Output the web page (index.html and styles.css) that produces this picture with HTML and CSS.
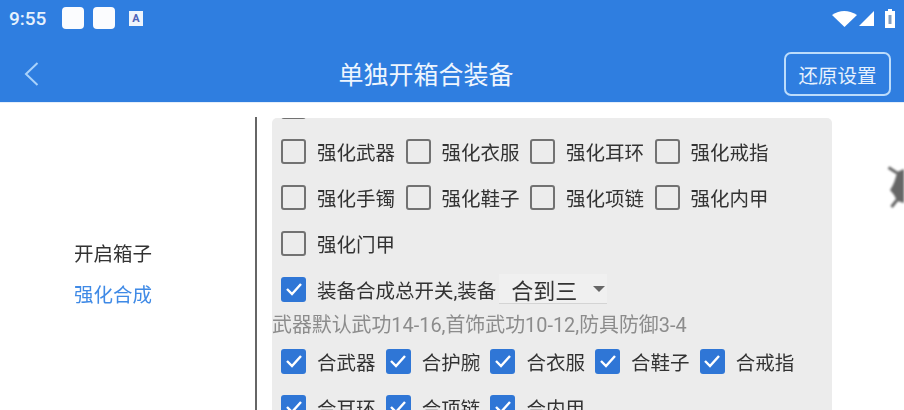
FILE: index.html
```html
<!DOCTYPE html>
<html lang="zh-CN">
<head>
  <meta charset="UTF-8">
  <meta name="viewport" content="width=device-width, initial-scale=1.0">
  <title>单独开箱合装备</title>
  <link rel="stylesheet" href="styles.css">
</head>
<body>

<div class="header">
  <div class="status-bar">
    <span class="clock">9:55</span>
    <span class="note-icon"></span>
    <span class="note-icon"></span>
    <span class="app-icon">A</span>
    <span class="status-right">
      <svg width="25" height="17" viewBox="0 0 25 17"><path d="M0 5 Q12 -3 25 5 L12.5 17 Z" fill="#fff"/></svg>
      <svg width="15" height="15" viewBox="0 0 15 15"><path d="M15 0 V15 H0 Z" fill="#fff"/></svg>
      <svg class="battery" width="10" height="19" viewBox="0 0 10 19"><path d="M3 0 H7 V2 H10 V19 H0 V2 H3 Z" fill="#fff"/><path d="M3.5 6 H6.5 V15 H3.5 Z" fill="#7f9cc0"/></svg>
    </span>
  </div>
  <div class="title-bar">
    <svg class="back" width="15" height="24" viewBox="0 0 15 24"><path d="M13.5 1 L2 12 L13.5 23" fill="none" stroke="#a9d2fb" stroke-width="2"/></svg>
    <h1>单独开箱合装备</h1>
    <button class="reset-btn" type="button">还原设置</button>
  </div>
</div>

<div class="content">
  <div class="sidebar">
    <div class="menu-item">开启箱子</div>
    <div class="menu-item active">强化合成</div>
  </div>

  <div class="panel">
    <div class="panel-scroll">
      <div class="row"><span class="box"></span></div>

      <div class="row row-wide">
        <label class="check"><span class="box"></span>强化武器</label>
        <label class="check"><span class="box"></span>强化衣服</label>
        <label class="check"><span class="box"></span>强化耳环</label>
        <label class="check"><span class="box"></span>强化戒指</label>
      </div>
      <div class="row row-wide">
        <label class="check"><span class="box"></span>强化手镯</label>
        <label class="check"><span class="box"></span>强化鞋子</label>
        <label class="check"><span class="box"></span>强化项链</label>
        <label class="check"><span class="box"></span>强化内甲</label>
      </div>
      <div class="row row-wide">
        <label class="check"><span class="box"></span>强化门甲</label>
      </div>

      <div class="row">
        <label class="check">
          <span class="box on"><svg width="18" height="14" viewBox="0 0 18 14"><path d="M2 7 L7 12 L16 2" fill="none" stroke="#fff" stroke-width="2.4"/></svg></span>
          装备合成总开关,装备
        </label>
        <div class="select">合到三<span class="arrow"></span></div>
      </div>
      <p class="hint">武器默认武功14-16,首饰武功10-12,防具防御3-4</p>

      <div class="row row-narrow">
        <label class="check"><span class="box on"><svg width="18" height="14" viewBox="0 0 18 14"><path d="M2 7 L7 12 L16 2" fill="none" stroke="#fff" stroke-width="2.4"/></svg></span>合武器</label>
        <label class="check"><span class="box on"><svg width="18" height="14" viewBox="0 0 18 14"><path d="M2 7 L7 12 L16 2" fill="none" stroke="#fff" stroke-width="2.4"/></svg></span>合护腕</label>
        <label class="check"><span class="box on"><svg width="18" height="14" viewBox="0 0 18 14"><path d="M2 7 L7 12 L16 2" fill="none" stroke="#fff" stroke-width="2.4"/></svg></span>合衣服</label>
        <label class="check"><span class="box on"><svg width="18" height="14" viewBox="0 0 18 14"><path d="M2 7 L7 12 L16 2" fill="none" stroke="#fff" stroke-width="2.4"/></svg></span>合鞋子</label>
        <label class="check"><span class="box on"><svg width="18" height="14" viewBox="0 0 18 14"><path d="M2 7 L7 12 L16 2" fill="none" stroke="#fff" stroke-width="2.4"/></svg></span>合戒指</label>
      </div>
      <div class="row row-narrow">
        <label class="check"><span class="box on"><svg width="18" height="14" viewBox="0 0 18 14"><path d="M2 7 L7 12 L16 2" fill="none" stroke="#fff" stroke-width="2.4"/></svg></span>合耳环</label>
        <label class="check"><span class="box on"><svg width="18" height="14" viewBox="0 0 18 14"><path d="M2 7 L7 12 L16 2" fill="none" stroke="#fff" stroke-width="2.4"/></svg></span>合项链</label>
        <label class="check"><span class="box on"><svg width="18" height="14" viewBox="0 0 18 14"><path d="M2 7 L7 12 L16 2" fill="none" stroke="#fff" stroke-width="2.4"/></svg></span>合内甲</label>
      </div>
    </div>
  </div>

  <svg class="float-icon" width="17" height="46" viewBox="0 0 17 46">
    <path d="M1.5 2.5 L10 8 M4.5 42 L10 35" fill="none" stroke="#666" stroke-width="3"/>
    <path d="M10 7 L17 4 V38 L10 36 Q8 30 3 25 Q8 18 10 7 Z" fill="#666"/>
  </svg>
</div>

</body>
</html>
```

FILE: styles.css
```css
html, body {
  margin: 0;
  height: 100%;
  overflow: hidden;
}

body {
  font-family: "Roboto", "Noto Sans CJK SC", sans-serif;
  background-color: #fff;
  color: #333;
  filter: blur(0.4px);
}

.header {
  height: 102px;
  background-color: #2f7ee0;
  color: #fff;
  border-bottom: 1px solid #e4eefa;
}

.status-bar {
  display: flex;
  align-items: center;
  height: 36px;
  padding: 0 9px;
}

.clock {
  width: 53px;
  font-size: 19px;
  font-weight: 500;
  color: #e6f1fd;
}

.note-icon {
  width: 22px;
  height: 22px;
  border-radius: 4px;
  background-color: #fbfcfe;
  margin-right: 9px;
}

.app-icon {
  width: 14px;
  height: 15px;
  margin-left: 5px;
  background-color: #eef4fc;
  color: #4c63b8;
  font-size: 11px;
  font-weight: 700;
  line-height: 15px;
  text-align: center;
}

.status-right {
  display: flex;
  align-items: center;
  gap: 2px;
  margin-left: auto;
}

.battery {
  margin-left: 9px;
}

.title-bar {
  position: relative;
  display: flex;
  align-items: center;
  justify-content: center;
  height: 66px;
  padding-right: 52px;
}

.title-bar h1 {
  margin: 8px 0 0;
  font-size: 25px;
  font-weight: 400;
  color: #eef5fe;
}

.back {
  position: absolute;
  left: 24px;
  top: 26px;
}

.reset-btn {
  position: absolute;
  right: 13px;
  top: 16px;
  width: 107px;
  height: 44px;
  padding: 0;
  border: 2px solid #bcdcfb;
  border-radius: 7px;
  background: transparent;
  color: #e6f1fd;
  font-family: inherit;
  font-size: 19.5px;
}

.content {
  position: relative;
  display: flex;
  height: 307px;
}

.sidebar {
  display: flex;
  flex-direction: column;
  gap: 19px;
  box-sizing: border-box;
  width: 257px;
  height: 293px;
  margin-top: 14px;
  padding: 127px 0 0 74px;
  border-right: 2px solid #666;
  font-size: 19.5px;
}

.menu-item {
  line-height: 22px;
}

.menu-item.active {
  color: #3f8ae6;
}

.panel {
  width: 560px;
  height: 292px;
  margin: 15px 0 0 15px;
  background-color: #ececec;
  border-radius: 5px 5px 0 0;
  overflow: hidden;
}

.panel-scroll {
  margin-top: -24px;
  padding-left: 9px;
}

.row {
  display: flex;
  align-items: center;
  height: 46px;
  font-size: 19.5px;
}

.row:first-child {
  height: 24px;
  margin-bottom: 10px;
  align-items: flex-start;
}

.check {
  display: flex;
  align-items: center;
  white-space: nowrap;
}

.box {
  display: flex;
  align-items: center;
  justify-content: center;
  flex: none;
  width: 25px;
  height: 25px;
  box-sizing: border-box;
  border: 2.5px solid #727272;
  border-radius: 3px;
  margin-right: 11px;
}

.box.on {
  border: 0;
  background-color: #2f76d6;
}

.row-wide .check {
  width: 124.5px;
}

.row-narrow .check {
  width: 104.7px;
}

.select {
  display: flex;
  align-items: center;
  width: 108px;
  height: 30px;
  margin-left: 3px;
  padding-left: 12px;
  box-sizing: border-box;
  background-color: #f0f0f0;
  border-bottom: 1px solid #d4d4d4;
  font-size: 22px;
}

.arrow {
  width: 0;
  height: 0;
  margin-left: 16px;
  border-left: 6px solid transparent;
  border-right: 6px solid transparent;
  border-top: 6px solid #666;
}

.hint {
  height: 26px;
  margin: 1px 0 -1px -9px;
  line-height: 26px;
  font-size: 19.9px;
  color: #8c8c8c;
  white-space: nowrap;
}

.float-icon {
  position: absolute;
  right: 0;
  top: 62px;
  filter: blur(1px);
}
```
